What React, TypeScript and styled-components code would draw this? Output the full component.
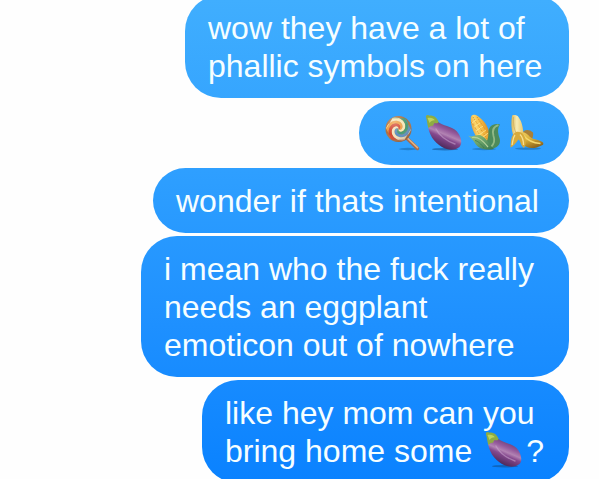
import React from "react";
import styled, { createGlobalStyle } from "styled-components";

const GlobalStyle = createGlobalStyle`
  * { box-sizing: border-box; }
  body {
    margin: 0;
    background: #fefefe;
    font-family: "Liberation Sans", Arial, sans-serif;
  }
`;

const Thread = styled.main`
  height: 100vh;
  overflow: hidden;
`;

const MessageList = styled.ul`
  list-style: none;
  margin: -5px 0 0;
  padding: 0 30px 0 20px;
  display: flex;
  flex-direction: column;
  align-items: flex-end;
  gap: 3px;
`;

const Bubble = styled.li<{ $width: number }>`
  width: ${(p) => p.$width}px;
  max-width: 100%;
  padding: 14px 22px 13px 23px;
  border-radius: 36px;
  background: linear-gradient(#40aefe 0%, #2d9eff 38%, #1e90ff 68%, #0a82ff 100%) fixed;
  color: #f6feff;
  font-size: 32px;
  line-height: 38px;
`;

const EmojiRow = styled.span`
  display: flex;
  height: 37px;
`;

const Emoji = styled.svg<{ $inline?: boolean }>`
  width: 41px;
  height: 36px;
  flex: none;
  margin: ${(p) => (p.$inline ? "0 2px" : "0")};
  overflow: visible;
  vertical-align: top;
`;

const swirlColors = ["#ef9a3c", "#f8e6b4", "#4a9b74", "#5b8fc0", "#f3e2bd", "#d4452f"];

function swirlArm(index: number, count: number) {
  const cx = 16.5;
  const cy = 14;
  const radius = 12.5;
  const twist = 4.2;
  const steps = 24;
  const step = (Math.PI * 2) / count;
  const at = (r: number, a: number) =>
    `${(cx + r * Math.cos(a)).toFixed(2)} ${(cy + r * Math.sin(a)).toFixed(2)}`;
  const points: string[] = [];
  for (let i = 0; i <= steps; i++) {
    const t = i / steps;
    points.push(at(t * radius, index * step - t * twist));
  }
  for (let i = steps; i >= 0; i--) {
    const t = i / steps;
    points.push(at(t * radius, (index + 1.04) * step - t * twist));
  }
  return `M${points.join("L")}Z`;
}

function Lollipop() {
  return (
    <Emoji viewBox="0 0 41 36" role="img" aria-label="lollipop">
      <defs>
        <radialGradient id="candyShine" cx="35%" cy="25%" r="80%">
          <stop offset="0" stopColor="#fff" stopOpacity=".3" />
          <stop offset=".6" stopColor="#fff" stopOpacity="0" />
          <stop offset="1" stopColor="#3d2a30" stopOpacity=".3" />
        </radialGradient>
      </defs>
      <ellipse cx="26" cy="34" rx="9" ry="1.2" fill="#145f9e" opacity=".5" />
      <path d="M24 22.5L35.5 33.5" stroke="#a96b4a" strokeWidth="3.4" strokeLinecap="round" />
      <path d="M24.3 22L35.5 32.7" stroke="#e3b183" strokeWidth="1.6" strokeLinecap="round" />
      <circle cx="16.5" cy="14" r="13" fill="#b0703f" />
      {swirlColors.map((color, i) => (
        <path key={i} d={swirlArm(i, swirlColors.length)} fill={color} />
      ))}
      <circle cx="16.5" cy="14" r="13" fill="url(#candyShine)" />
    </Emoji>
  );
}

function Eggplant({ id, inline }: { id: string; inline?: boolean }) {
  return (
    <Emoji $inline={inline} viewBox="0 0 41 36" role="img" aria-label="eggplant">
      <defs>
        <linearGradient id={id} x1=".75" y1=".1" x2=".35" y2=".9">
          <stop offset="0" stopColor="#5f3a6b" />
          <stop offset=".3" stopColor="#94599b" />
          <stop offset=".48" stopColor="#b283b3" />
          <stop offset=".62" stopColor="#85498e" />
          <stop offset="1" stopColor="#4b2858" />
        </linearGradient>
      </defs>
      <ellipse cx="22" cy="34.2" rx="13" ry="1.3" fill="#104c88" opacity=".55" />
      <path d="M5 9C5 19 11 27 19 32C26 36 33 35 36.5 32C40 28 38 21 33.5 16C28 11 20 11 14.5 6.5Z" fill={`url(#${id})`} />
      <path d="M13 14C17 22 24 26 32 29" stroke="#c9a5cd" strokeWidth="1.4" fill="none" opacity=".55" strokeLinecap="round" />
      <path d="M3 2.5C2.5 0 5-.5 6.5 .8C9-.5 13.5 1.6 15.5 6.5C15.5 8.8 13 8.4 11.5 8C10.5 9.9 9.5 12.2 8.3 10.6C6.5 12 5.3 14.5 4.8 11C4 8 4.2 5.5 3 2.5Z" fill="#8eac43" />
      <path d="M4.5 3C8 2 10.5 3.2 12 5.4C9.4 5.2 8 6 6.6 8Z" fill="#bdd45c" />
    </Emoji>
  );
}

function Corn() {
  return (
    <Emoji viewBox="0 0 41 36" role="img" aria-label="corn">
      <defs>
        <linearGradient id="cob" x1="0" y1=".7" x2="1" y2=".3">
          <stop offset="0" stopColor="#d98b27" />
          <stop offset=".35" stopColor="#fbd66a" />
          <stop offset=".65" stopColor="#f3b43c" />
          <stop offset="1" stopColor="#c87d20" />
        </linearGradient>
        <linearGradient id="husk" x1="0" y1="0" x2="1" y2="1">
          <stop offset="0" stopColor="#a1c47b" />
          <stop offset=".5" stopColor="#68a069" />
          <stop offset="1" stopColor="#36764d" />
        </linearGradient>
      </defs>
      <ellipse cx="20" cy="34" rx="12" ry="1.2" fill="#145f9e" opacity=".5" />
      <path d="M6.8 4C6.5 -.5 10-1.3 14 1.3C20 5.5 24 11 25.5 18L24 28L16 26C10 20 7 12 6.8 4Z" fill="url(#cob)" />
      <path d="M9 2L23 24M13 2L25 20M7.4 7L19 25" stroke="#cf8a2a" strokeWidth=".8" strokeDasharray="1.5 1" fill="none" />
      <path d="M8 8L12 5M10 12L16 8M12 16L19 11M15 20L22 15M18 23L24 18" stroke="#fff0a0" strokeWidth=".7" fill="none" />
      <path d="M36 9.5C29 7.5 24 12 24.5 18C24.5 22 23 26 22 29L28 33.5C35 32.5 37 28 35.5 23C34 18 33 14 36 9.5Z" fill="#4d8b5b" />
      <path d="M34.5 10.2C28.5 12 28 16 29.5 21C31 25 30 29 27 32" stroke="#91b985" strokeWidth="1.8" fill="none" />
      <path d="M4 20.5C8 23.5 12 18.5 17 20.5C23 23 25 30 30 34C22 35.5 15 34 11.5 29C9.5 26 8 23.5 4 20.5Z" fill="url(#husk)" />
      <path d="M8 22.5C15 21.5 19 26 24 32" stroke="#b4d19a" strokeWidth="1.2" fill="none" />
      <path d="M11 25.5C14 26 17 29 20 33" stroke="#3e7a4e" strokeWidth=".8" fill="none" />
    </Emoji>
  );
}

function Banana() {
  return (
    <Emoji viewBox="0 0 41 36" role="img" aria-label="banana">
      <defs>
        <linearGradient id="peel" x1="0" y1="0" x2=".6" y2="1">
          <stop offset="0" stopColor="#efd069" />
          <stop offset=".5" stopColor="#dfb43a" />
          <stop offset="1" stopColor="#8f671c" />
        </linearGradient>
        <linearGradient id="flesh" x1="0" y1="0" x2="1" y2="0">
          <stop offset="0" stopColor="#d9b759" />
          <stop offset=".45" stopColor="#f8ecb5" />
          <stop offset="1" stopColor="#e6c66c" />
        </linearGradient>
      </defs>
      <ellipse cx="23" cy="33.6" rx="13" ry="1.2" fill="#145f9e" opacity=".5" />
      <path d="M17 19C18 14.5 24 13.5 28 17.5C28.5 20 28 22 26.5 25L18 24Z" fill="#a98037" />
      <path d="M7 1C7-.5 12-.5 13.5 2C17 7 18 12 18.5 20L12 24L8 20C6 13 6 7 7 1Z" fill="url(#flesh)" />
      <path d="M8.6 2C8 9 9 14 11.5 19" stroke="#d1ae60" strokeWidth=".8" fill="none" />
      <path d="M11 20C16 15.5 21 17 25 22C28 24.5 32 24 37.5 27C39 28.5 38.5 30 36.5 30.5C29 34.5 21 34 17 28Z" fill="url(#peel)" />
      <path d="M18 20C22 25 28 28 35.5 28.5" stroke="#f5d970" strokeWidth="1.4" fill="none" />
      <path d="M9 18.5C5.5 22 6 28 5.5 32.5C10 30.5 12 26 13.5 24.5C16 26 15 30 19 33C22 29 21.5 20.5 16 17.5C13 16.5 11 16.5 9 18.5Z" fill="#d8aa3a" />
      <path d="M10 20C7.5 23 8 27 7 30M15 19.5C18 22.5 18.5 26 18.5 30" stroke="#f5df92" strokeWidth="1.3" fill="none" />
    </Emoji>
  );
}

export default function App() {
  return (
    <>
      <GlobalStyle />
      <Thread>
        <MessageList>
          <Bubble $width={384}>wow they have a lot of phallic symbols on here</Bubble>
          <Bubble $width={210}>
            <EmojiRow>
              <Lollipop />
              <Eggplant id="eggplantSkin" />
              <Corn />
              <Banana />
            </EmojiRow>
          </Bubble>
          <Bubble $width={416}>wonder if thats intentional</Bubble>
          <Bubble $width={428}>i mean who the fuck really needs an eggplant emoticon out of nowhere</Bubble>
          <Bubble $width={367}>
            like hey mom can you bring home some{" "}
            <Eggplant inline id="eggplantSkinInline" />?
          </Bubble>
        </MessageList>
      </Thread>
    </>
  );
}
